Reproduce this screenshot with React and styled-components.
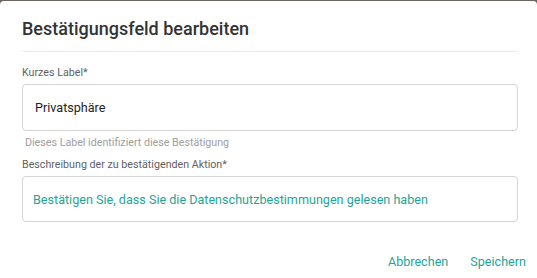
import React from "react";
import styled, { createGlobalStyle } from "styled-components";

const GlobalStyle = createGlobalStyle`
  html, body {
    margin: 0;
    padding: 0;
    height: 100%;
    background: #6b6560;
  }
  #root {
    height: 100%;
  }
  * {
    box-sizing: border-box;
  }
`;

const App = () => {
  return (
    <>
      <GlobalStyle />
      <Dialog>
        <Header>
          <Title>Bestätigungsfeld bearbeiten</Title>
        </Header>

        <Field>
          <Label>Kurzes Label*</Label>
          <InputBox height={47}>Privatsphäre</InputBox>
          <Helper>Dieses Label identifiziert diese Bestätigung</Helper>
        </Field>

        <Field second>
          <Label>Beschreibung der zu bestätigenden Aktion*</Label>
          <InputBox height={46} accent>
            Bestätigen Sie, dass Sie die Datenschutzbestimmungen gelesen haben
          </InputBox>
        </Field>

        <Actions>
          <ActionButton>Abbrechen</ActionButton>
          <ActionButton>Speichern</ActionButton>
        </Actions>
      </Dialog>
    </>
  );
};

export default App;

const Dialog = styled.div`
  margin-top: 1px;
  height: calc(100% - 1px);
  background: #fff;
  border-radius: 4px 4px 0 0;
  padding: 0 19px 0 22px;
  font-family: Roboto, "Liberation Sans", sans-serif;
  display: flex;
  flex-direction: column;
`;

const Header = styled.div`
  padding: 16px 0 10px;
  border-bottom: 1px solid #ececec;
`;

const Title = styled.h2`
  margin: 0;
  font-size: 18px;
  line-height: 24px;
  font-weight: 500;
  color: #333;
`;

const Field = styled.div`
  display: flex;
  flex-direction: column;
  margin-top: ${(p) => (p.second ? 6 : 13)}px;
`;

const Label = styled.div`
  font-size: 10.7px;
  line-height: 16px;
  color: #5f5f5f;
  margin-bottom: 3px;
`;

const InputBox = styled.div`
  height: ${(p) => p.height}px;
  border: 1px solid #d4d4d4;
  border-radius: 4px;
  display: flex;
  align-items: center;
  padding: 0 12px;
  font-size: 12.6px;
  color: ${(p) => (p.accent ? "#1fa595" : "#222")};
  padding-left: ${(p) => (p.accent ? 10 : 12)}px;
`;

const Helper = styled.div`
  font-size: 10.7px;
  line-height: 16px;
  color: #9e9e9e;
  margin: 4px 0 0 3px;
`;

const Actions = styled.div`
  display: flex;
  justify-content: flex-end;
  gap: 6px;
  margin: 21px -16px 0 0;
`;

const ActionButton = styled.button`
  border: none;
  background: transparent;
  padding: 0 8px;
  height: 36px;
  font-family: inherit;
  font-size: 12.6px;
  color: #1fa595;
  cursor: pointer;
`;
